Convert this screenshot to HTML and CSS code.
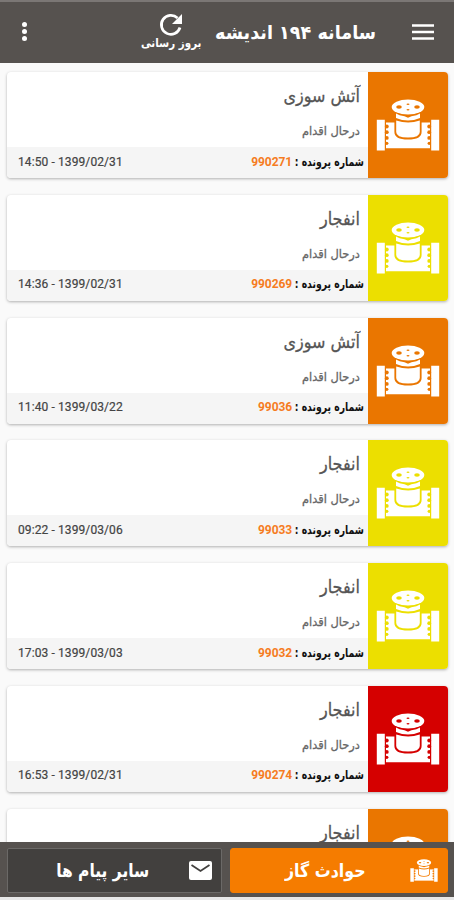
FILE: index.html
```html
<!DOCTYPE html>
<html lang="fa" dir="rtl">
<head>
    <meta charset="UTF-8">
    <meta name="viewport" content="width=device-width, initial-scale=1.0">
    <title>سامانه ۱۹۴ اندیشه</title>
    <link rel="stylesheet" href="styles.css">
</head>
<body>
    <svg class="defs" width="0" height="0">
        <symbol id="valve" viewBox="0 0 64 52">
            <path class="fg" d="M.8 20.800h8v30.700h-8zM55.200 20.800h8v30.700h-8z"/>
            <path class="fg" d="M10 23.500h44v25.700H10z"/>
            <g class="bg">
                <circle cx="10.800" cy="27.500" r="1.900"/><circle cx="10.800" cy="33.200" r="1.900"/><circle cx="10.800" cy="38.900" r="1.900"/><circle cx="10.800" cy="44.300" r="1.600"/>
                <circle cx="53.200" cy="27.500" r="1.900"/><circle cx="53.200" cy="33.200" r="1.900"/><circle cx="53.200" cy="38.900" r="1.900"/><circle cx="53.200" cy="44.300" r="1.600"/>
            </g>
            <path class="bg" d="M18.400 20h27.200v13q0 7.500-13.600 7.500T18.400 33z"/>
            <path class="fg" d="M20.200 21.500q12 4 23.600 0V33q0 5.500-11.800 5.500T20.200 33z"/>
            <path class="fg" d="M20 14.500q3 2.300 8.500 2.800l3.500 1.400 3.500-1.400q5.500-.5 8.500-2.800v4.500q-12 5-24 0z"/>
            <ellipse class="fg" cx="32" cy="8" rx="16.300" ry="7.500"/>
            <g class="bg">
                <ellipse cx="23" cy="8" rx="2.800" ry="1.700"/><ellipse cx="41" cy="8" rx="2.800" ry="1.700"/>
                <ellipse cx="32" cy="5.200" rx="1.500" ry=".7"/><ellipse cx="32" cy="10.800" rx="1.500" ry=".7"/>
            </g>
        </symbol>
    </svg>
    <header class="toolbar">
        <svg class="menu" viewBox="0 0 22 16"><path d="M0 1.400h22M0 7.900h22M0 14.400h22"/></svg>
        <h1 class="title"><span>سامانه ۱۹۴ اندیشه</span></h1>
        <div class="refresh">
            <svg viewBox="0 0 24 24"><path class="ring" d="M18.500 5A9.500 9.500 0 1 0 21 14.500"/><path class="tip" d="M23 1v10H13z"/></svg>
            <span>بروز رسانی</span>
        </div>
        <div class="more"><i></i><i></i><i></i></div>
    </header>
    <main class="list">
        <article class="card orange">
            <div class="tile"><svg><use href="#valve"/></svg></div>
            <div class="content">
                <h2><span>آتش سوزی</span></h2>
                <p><span>درحال اقدام</span></p>
                <div class="info"><span class="label">شماره پرونده :</span><b>990271</b><time dir="ltr">14:50 - 1399/02/31</time></div>
            </div>
        </article>
        <article class="card yellow">
            <div class="tile"><svg><use href="#valve"/></svg></div>
            <div class="content">
                <h2><span>انفجار</span></h2>
                <p><span>درحال اقدام</span></p>
                <div class="info"><span class="label">شماره پرونده :</span><b>990269</b><time dir="ltr">14:36 - 1399/02/31</time></div>
            </div>
        </article>
        <article class="card orange">
            <div class="tile"><svg><use href="#valve"/></svg></div>
            <div class="content">
                <h2><span>آتش سوزی</span></h2>
                <p><span>درحال اقدام</span></p>
                <div class="info"><span class="label">شماره پرونده :</span><b>99036</b><time dir="ltr">11:40 - 1399/03/22</time></div>
            </div>
        </article>
        <article class="card yellow">
            <div class="tile"><svg><use href="#valve"/></svg></div>
            <div class="content">
                <h2><span>انفجار</span></h2>
                <p><span>درحال اقدام</span></p>
                <div class="info"><span class="label">شماره پرونده :</span><b>99033</b><time dir="ltr">09:22 - 1399/03/06</time></div>
            </div>
        </article>
        <article class="card yellow">
            <div class="tile"><svg><use href="#valve"/></svg></div>
            <div class="content">
                <h2><span>انفجار</span></h2>
                <p><span>درحال اقدام</span></p>
                <div class="info"><span class="label">شماره پرونده :</span><b>99032</b><time dir="ltr">17:03 - 1399/03/03</time></div>
            </div>
        </article>
        <article class="card red">
            <div class="tile"><svg><use href="#valve"/></svg></div>
            <div class="content">
                <h2><span>انفجار</span></h2>
                <p><span>درحال اقدام</span></p>
                <div class="info"><span class="label">شماره پرونده :</span><b>990274</b><time dir="ltr">16:53 - 1399/02/31</time></div>
            </div>
        </article>
        <article class="card orange">
            <div class="tile"><svg><use href="#valve"/></svg></div>
            <div class="content">
                <h2><span>انفجار</span></h2>
            </div>
        </article>
    </main>
    <nav class="tabs">
        <a class="tab active">
            <svg class="tab-valve"><use href="#valve"/></svg>
            <span>حوادث گاز</span>
        </a>
        <a class="tab">
            <svg class="mail" viewBox="0 0 23 19"><rect width="23" height="19" rx="2"/><path d="M2.500 4l9 6 9-6"/></svg>
            <span>سایر پیام ها</span>
        </a>
    </nav>
</body>
</html>
```

FILE: styles.css
```css
* {
    box-sizing: border-box;
}
body {
    display: flex;
    flex-direction: column;
    height: 900px;
    margin: 0;
    overflow: hidden;
    background: #fafafa;
    font-family: "DejaVu Sans", sans-serif;
}
h1, h2, p {
    margin: 0;
    white-space: nowrap;
}
span {
    display: inline-block;
    white-space: nowrap;
    transform-origin: right center;
}
.defs {
    position: absolute;
}
.toolbar {
    display: flex;
    flex: none;
    align-items: center;
    height: 63px;
    padding: 0 20px 2px 22px;
    border-top: 2px solid #7b7775;
    background: #56524f;
    color: #fff;
}
.menu {
    width: 22px;
    height: 16px;
    fill: none;
    stroke: #fff;
    stroke-width: 2.5;
}
.title {
    width: 161px;
    margin-right: 36px;
    font-size: 19px;
    line-height: 30px;
}
.title span {
    transform: scaleX(0.925);
}
.refresh {
    display: flex;
    flex-direction: column;
    align-items: center;
    width: 60px;
    margin-right: 14px;
}
.refresh svg {
    width: 24px;
    height: 24px;
}
.ring {
    fill: none;
    stroke: #fff;
    stroke-width: 2.7;
}
.tip {
    fill: #fff;
}
.refresh span {
    font-size: 12px;
    font-weight: bold;
    line-height: 13px;
    transform: scaleX(0.86);
    transform-origin: center;
}
.more {
    display: flex;
    flex-direction: column;
    gap: 2px;
    margin-right: auto;
}
.more i {
    width: 5px;
    height: 5px;
    border-radius: 50%;
    background: #fff;
}
.list {
    display: flex;
    flex: 1;
    flex-direction: column;
    gap: 16.8px;
    min-height: 0;
    padding: 9px 6px 0 7px;
    overflow: hidden;
}
.card {
    display: flex;
    flex: none;
    height: 106px;
    border-radius: 4px;
    background: #fff;
    box-shadow: 0 1px 3px rgba(0, 0, 0, 0.3);
    overflow: hidden;
}
.orange {
    --tile: #ea7600;
}
.yellow {
    --tile: #ecdf00;
}
.red {
    --tile: #d50000;
}
.tile {
    display: flex;
    flex: none;
    align-items: center;
    justify-content: center;
    width: 80px;
    background: var(--tile);
}
.tile svg {
    width: 64px;
    height: 52px;
}
.fg {
    fill: #fff;
}
.bg {
    fill: var(--tile);
}
.content {
    display: flex;
    flex: 1;
    flex-direction: column;
    min-width: 0;
}
.content h2 {
    padding: 9px 8px 0;
    color: #555;
    font-size: 18px;
    font-weight: normal;
    line-height: 30px;
    -webkit-text-stroke: 0.3px #555;
}
.content h2 span {
    transform: scaleX(0.89);
}
.content p {
    padding: 10px 8px 0;
    color: #666;
    font-size: 12px;
    line-height: 20px;
    -webkit-text-stroke: 0.3px #666;
}
.content p span {
    transform: scaleX(0.95);
}
.info {
    display: flex;
    align-items: center;
    height: 31px;
    margin-top: auto;
    padding: 0 4px 2px 11px;
    background: #f5f5f5;
    font-size: 12px;
}
.label {
    width: 69px;
    color: #111;
    font-weight: bold;
    transform: scaleX(0.775);
}
.info b {
    margin-right: 3px;
    color: #f57c1f;
    font-family: Roboto, sans-serif;
    font-size: 12px;
    letter-spacing: -0.1px;
}
.info time {
    margin-right: auto;
    color: #444;
    font-family: Roboto, sans-serif;
    font-size: 12px;
    letter-spacing: 0.1px;
    -webkit-text-stroke: 0.2px #444;
}
.tabs {
    display: flex;
    flex: none;
    gap: 8px;
    height: 58px;
    padding: 6px 6px 4px 7px;
    border-bottom: 3px solid #e8e8e8;
    background: #56524f;
}
.tab {
    display: flex;
    align-items: center;
    width: 215px;
    padding-right: 9px;
    border: 1px solid #6b6967;
    border-radius: 2px;
    background: #42403e;
    color: #fff;
    font-size: 18px;
    font-weight: bold;
}
.tab.active {
    --tile: #f57c00;
    width: 218px;
    border-color: #f57c00;
    border-radius: 3px;
    background: #f57c00;
}
.tab-valve {
    width: 28px;
    height: 23px;
}
.tab span {
    margin-right: 40px;
    transform: scaleX(0.86);
}
.tab.active span {
    margin-right: 44px;
    transform: scaleX(0.88);
}
.mail {
    width: 23px;
    height: 19px;
    fill: #fff;
}
.mail path {
    fill: none;
    stroke: #42403e;
    stroke-width: 1.8;
}
```
